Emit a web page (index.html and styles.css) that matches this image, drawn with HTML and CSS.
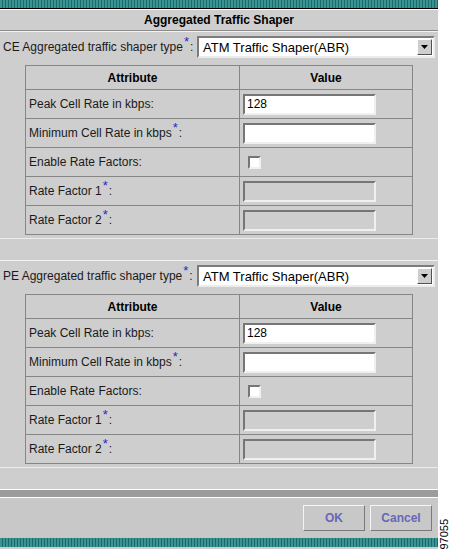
FILE: index.html
```html
<!DOCTYPE html>
<html lang="en">
<head>
  <meta charset="UTF-8">
  <meta name="viewport" content="width=device-width, initial-scale=1.0">
  <title>Aggregated Traffic Shaper</title>
  <link rel="stylesheet" href="styles.css">
</head>
<body>
  <div class="page">
    <div class="panel">
      <div class="stripe"></div>
      <div class="title">Aggregated Traffic Shaper</div>

      <!-- CE shaper -->
      <div class="shaper-row">
        <label>CE Aggregated traffic shaper type<span class="req">*</span>:</label>
        <div class="combo">
          <span>ATM Traffic Shaper(ABR)</span>
          <span class="combo-btn"><svg width="7" height="4" viewBox="0 0 7 4"><path d="M0 0H7L3.5 4Z" fill="#000"/></svg></span>
        </div>
      </div>
      <table class="attrs">
        <tr class="head"><th class="col-attr">Attribute</th><th>Value</th></tr>
        <tr><td>Peak Cell Rate in kbps:</td><td><input type="text" value="128"></td></tr>
        <tr><td>Minimum Cell Rate in kbps<span class="req">*</span>:</td><td><input type="text"></td></tr>
        <tr><td>Enable Rate Factors:</td><td><input type="checkbox"></td></tr>
        <tr><td>Rate Factor 1<span class="req">*</span>:</td><td><input type="text" disabled></td></tr>
        <tr><td>Rate Factor 2<span class="req">*</span>:</td><td><input type="text" disabled></td></tr>
      </table>
      <div class="spacer"></div>

      <!-- PE shaper -->
      <div class="shaper-row">
        <label>PE Aggregated traffic shaper type<span class="req">*</span>:</label>
        <div class="combo">
          <span>ATM Traffic Shaper(ABR)</span>
          <span class="combo-btn"><svg width="7" height="4" viewBox="0 0 7 4"><path d="M0 0H7L3.5 4Z" fill="#000"/></svg></span>
        </div>
      </div>
      <table class="attrs">
        <tr class="head"><th class="col-attr">Attribute</th><th>Value</th></tr>
        <tr><td>Peak Cell Rate in kbps:</td><td><input type="text" value="128"></td></tr>
        <tr><td>Minimum Cell Rate in kbps<span class="req">*</span>:</td><td><input type="text"></td></tr>
        <tr><td>Enable Rate Factors:</td><td><input type="checkbox"></td></tr>
        <tr><td>Rate Factor 1<span class="req">*</span>:</td><td><input type="text" disabled></td></tr>
        <tr><td>Rate Factor 2<span class="req">*</span>:</td><td><input type="text" disabled></td></tr>
      </table>
      <div class="spacer"></div>

      <div class="bar"></div>
      <div class="footer">
        <button class="btn">OK</button>
        <button class="btn">Cancel</button>
      </div>
      <div class="stripe bottom"></div>
    </div>
    <div class="fig-id"><span>97055</span></div>
  </div>
</body>
</html>
```

FILE: styles.css
```css
/* Dialog look: flat gray panel with teal stripes */
body {
  margin: 0;
  background: #fff;
  font-family: "Liberation Sans", Arial, sans-serif;
  font-size: 12px;
  color: #1a1a1a;
}
.page {
  display: flex;
  width: 450px;
  height: 549px;
  overflow: hidden;
}
.panel {
  width: 438px;
  background: #cecece;
  display: flex;
  flex-direction: column;
}
.stripe {
  height: 8px;
  background: repeating-linear-gradient(90deg, #3a9494 0 2px, #1d6a6a 2px 3px);
  border-bottom: 1px solid #000;
}
.stripe.bottom {
  height: 9px;
  border-bottom: 0;
}
.title {
  height: 20px;
  line-height: 20px;
  border-top: 1px solid #fff;
  border-bottom: 1px solid #8c8c8c;
  text-align: center;
  font-weight: bold;
  color: #000;
}
.shaper-row {
  display: flex;
  align-items: center;
  border-top: 1px solid #f2f2f2;
  padding: 4px 3px 7px 3px;
}
.shaper-row label {
  white-space: nowrap;
}
.req {
  color: #2626c8;
  font-size: 13px;
  vertical-align: 5px;
  line-height: 0;
  margin: 0 1px 0 1px;
}
.combo {
  margin-left: auto;
  width: 238px;
  height: 22px;
  box-sizing: border-box;
  background: #fff;
  border: 2px solid;
  border-color: #7c7c7c #ececec #ececec #7c7c7c;
  display: flex;
  align-items: center;
  justify-content: space-between;
  padding-left: 4px;
  font-size: 13px;
  color: #000;
}
.combo-btn {
  width: 15px;
  height: 16px;
  box-sizing: border-box;
  background: #cecece;
  border: 1px solid;
  border-color: #fff #505050 #505050 #fff;
  display: flex;
  align-items: center;
  justify-content: center;
  margin-right: 1px;
}
table.attrs {
  margin-left: 25px;
  width: 388px;
  border-collapse: collapse;
  border: 1px solid #868686;
}
.attrs th,
.attrs td {
  border: 1px solid #868686;
  padding: 0 3px;
  text-align: left;
}
.attrs th {
  text-align: center;
  font-weight: bold;
  color: #000;
}
.attrs .col-attr {
  width: 207px;
}
.attrs tr {
  height: 29px;
}
.attrs tr.head {
  height: 24px;
}
.attrs input[type="text"] {
  width: 133px;
  height: 21px;
  box-sizing: border-box;
  margin: 0;
  padding: 0 2px;
  border: 2px solid;
  border-color: #767676 #f0f0f0 #f0f0f0 #767676;
  background: #fff;
  font-family: "Liberation Sans", Arial, sans-serif;
  font-size: 12px;
  color: #000;
  display: block;
}
.attrs input[disabled] {
  background: #cecece;
}
.attrs input[type="checkbox"] {
  appearance: none;
  width: 13px;
  height: 13px;
  margin: 0 0 0 5px;
  box-sizing: border-box;
  border: 2px solid;
  border-color: #767676 #f0f0f0 #f0f0f0 #767676;
  background: #fff;
  display: block;
}
.spacer {
  margin-top: 3px;
  height: 21px;
  border-top: 1px solid #ececec;
}
.bar {
  height: 7px;
  background: #9c9c9c;
  border-top: 1px solid #fff;
  border-bottom: 1px solid #fff;
}
.footer {
  height: 40px;
  box-sizing: border-box;
  background: #c8c8c8;
  display: flex;
  justify-content: flex-end;
  align-items: flex-start;
  gap: 5px;
  padding: 7px 6px 0 0;
}
.btn {
  width: 62px;
  height: 26px;
  background: #c8c8c8;
  border: 1px solid;
  border-color: #f4f4f4 #7a7a7a #7a7a7a #f4f4f4;
  font-family: "Liberation Sans", Arial, sans-serif;
  font-size: 12px;
  font-weight: bold;
  color: #6767b6;
  padding: 0;
}
.fig-id {
  width: 12px;
  display: flex;
  align-items: flex-end;
  justify-content: center;
}
.fig-id span {
  writing-mode: vertical-rl;
  transform: rotate(180deg);
  font-size: 11px;
  line-height: 10px;
  color: #000;
  margin-bottom: -1px;
}
```
